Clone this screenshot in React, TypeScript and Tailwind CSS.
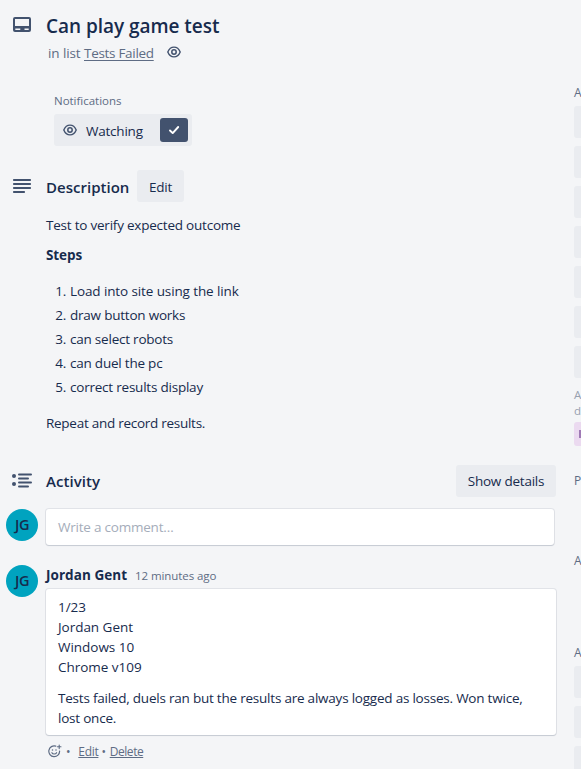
import type { ReactNode } from 'react';

function Eye() {
  return (
    <svg width="14" height="12" viewBox="0 0 14 12" fill="none" stroke="#42526e" className="block shrink-0">
      <path d="M.8 6C2.300 2.300 4.400 1.100 7 1.100S11.700 2.300 13.200 6C11.700 9.700 9.600 10.900 7 10.900S2.300 9.700.8 6Z" strokeWidth="1.400" />
      <circle cx="7" cy="6" r="2.200" strokeWidth="1.500" />
    </svg>
  );
}

function CardIcon() {
  return (
    <svg width="20" height="16" viewBox="0 0 20 16" className="block">
      <path fillRule="evenodd" fill="#42526e" d="M3 0h14a2 2 0 0 1 2 2v11a2 2 0 0 1-2 2H3a2 2 0 0 1-2-2V2A2 2 0 0 1 3 0ZM3 2v7h14V2ZM3.300 11.600v1.400h5v-1.400ZM12.500 11.600v1.400h4.200v-1.400Z" />
    </svg>
  );
}

function LinesIcon() {
  return (
    <svg width="20" height="16" viewBox="0 0 20 16" fill="#42526e" className="block">
      <rect x="1" y="1" width="18" height="2" rx="0.800" />
      <rect x="1" y="5" width="18" height="2" rx="0.800" />
      <rect x="1" y="9" width="18" height="2" rx="0.800" />
      <rect x="1" y="13" width="12" height="2" rx="0.800" />
    </svg>
  );
}

function ActivityIcon() {
  return (
    <svg width="22" height="16" viewBox="0 0 22 16" fill="#42526e" className="block">
      <circle cx="3" cy="3" r="2" />
      <circle cx="3" cy="11" r="2" />
      <rect x="7" y="0.500" width="14" height="2" rx="1" />
      <rect x="7" y="4.500" width="11" height="2" rx="1" />
      <rect x="7" y="8.500" width="14" height="2" rx="1" />
      <rect x="7" y="12.500" width="11" height="2" rx="1" />
    </svg>
  );
}

function Reaction() {
  return (
    <svg width="14" height="14" viewBox="0 0 14 14" fill="none" stroke="#5e6c84" strokeWidth="1.200" strokeLinecap="round" className="block shrink-0">
      <path d="M7.800 2.100A5.400 5.400 0 1 0 11.600 7" />
      <path d="M3.900 8.700c.9 1.700 3.800 1.700 4.700 0" />
      <path d="M4.500 5.900h.01M8 5.900h.01" strokeWidth="1.500" />
      <path d="M11.200 1v3.600M9.400 2.800H13" strokeWidth="1.100" />
    </svg>
  );
}

function Avatar() {
  return <div className="flex size-8 shrink-0 items-center justify-center rounded-full bg-[#00a3bf] text-[14.5px] font-semibold tracking-[-0.4px] text-[#172b4d]">JG</div>;
}

function SideButtons({ count }: { count: number }) {
  return (
    <div className="flex flex-col gap-2">
      {Array.from({ length: count }, (_, i) => (
        <div key={i} className="h-8 w-42 shrink-0 rounded-[3px] bg-[#eaecf0]" />
      ))}
    </div>
  );
}

function SideHeading({ children }: { children: ReactNode }) {
  return <h3 className="h-5 text-[12px] leading-5 font-medium text-[#5e6c84]">{children}</h3>;
}

const steps = ['Load into site using the link', 'draw button works', 'can select robots', 'can duel the pc', 'correct results display'];

export default function App() {
  return (
    <div className="flex h-[769px] w-full overflow-hidden bg-[#f4f5f7] font-['Open_Sans','Noto_Sans',sans-serif] text-[13.5px] leading-5 tracking-[-0.22px] text-[#172b4d]">
      <main className="w-[557px] shrink-0">
        <header className="flex pt-3.5">
          <div className="w-[46px] shrink-0 pt-[3px] pl-3"><CardIcon /></div>
          <div>
            <h1 className="text-[19px] leading-6 font-semibold tracking-[-0.04px] whitespace-nowrap">Can play game test</h1>
            <div className="mt-[5px] flex items-center pl-0.5 tracking-[-0.3px] text-[#5e6c84]">
              <span className="w-9 tracking-[-0.1px]">in list</span>
              <a className="underline underline-offset-2">Tests Failed</a>
              <span className="-mt-0.5 ml-[13px]"><Eye /></span>
            </div>
          </div>
        </header>

        <section className="mt-[27px] ml-[54px]">
          <h3 className="h-6 pt-px text-[11.5px] leading-5 font-medium tracking-[-0.02px] text-[#5e6c84]">Notifications</h3>
          <div className="flex h-8 w-[138px] items-center rounded-[3px] bg-[#eaecf0] pr-1 pl-[9px]">
            <span><Eye /></span>
            <span className="ml-[9px] pt-0.5">Watching</span>
            <span className="ml-auto flex h-6 w-7 items-center justify-center rounded-[3px] bg-[#42526e]">
              <svg width="12" height="10" viewBox="0 0 12 10" fill="none" stroke="white" strokeWidth="1.900" strokeLinecap="round" strokeLinejoin="round"><path d="m2 5.500 2.700 2.600L10.200 2" /></svg>
            </span>
          </div>
        </section>

        <section className="mt-6">
          <div className="flex h-8 items-center">
            <div className="w-[46px] pl-3"><LinesIcon /></div>
            <h2 className="w-[91px] pt-0.5 text-[15px] font-semibold tracking-[0.02px] whitespace-nowrap">Description</h2>
            <button className="h-8 w-[47px] rounded-[3px] bg-[#eaecf0] pt-0.5">Edit</button>
          </div>
          <div className="mt-[13px] ml-[46px]">
            <p>Test to verify expected outcome</p>
            <p className="mt-2.5 font-bold tracking-[-0.1px]">Steps</p>
            <ol className="mt-4 flex flex-col gap-1">
              {steps.map((s, i) => (
                <li key={s} className="flex"><span className="w-6 pr-1 text-right">{i + 1}.</span><span className={i === 0 ? 'tracking-[-0.11px]' : ''}>{s}</span></li>
              ))}
            </ol>
            <p className="mt-4 tracking-[-0.27px]">Repeat and record results.</p>
          </div>
        </section>

        <section className="mt-8">
          <div className="flex h-8 items-center">
            <div className="w-[46px] pl-[11px]"><ActivityIcon /></div>
            <h2 className="text-[15px] font-semibold tracking-[0.05px]">Activity</h2>
            <button className="mr-px ml-auto h-8 w-[100px] rounded-[3px] bg-[#eaecf0]">Show details</button>
          </div>
          <div className="mt-3 flex pl-1.5">
            <Avatar />
            <div className="ml-2 h-[36px] w-[508px] rounded-[3px] bg-white pt-2 pl-3 text-[#a5adba] shadow-[0_1px_1px_0_#091e4220,0_0_0_1px_#091e4214]">Write a comment…</div>
          </div>
          <div className="mt-5 flex pl-1.5">
            <Avatar />
            <div className="ml-2 w-[510px]">
              <div className="flex h-5">
                <span className="w-[89px] font-bold tracking-[0.05px]">Jordan Gent</span>
                <span className="pt-px text-[11.5px] tracking-[-0.07px] text-[#5e6c84]">12 minutes ago</span>
              </div>
              <div className="mt-1 h-[146px] rounded-[3px] bg-white px-3 pt-2 shadow-[0_1px_1px_0_#091e4220,0_0_0_1px_#091e4214]">
                <p className="tracking-[-0.03px]">1/23<br />Jordan Gent<br />Windows 10<br />Chrome v109</p>
                <p className="mt-[11px] whitespace-nowrap">Tests failed, duels ran but the results are always logged as losses. Won twice,<br />lost once.</p>
              </div>
              <div className="mt-[7px] flex items-center pl-0.5 text-[12px] text-[#5e6c84]">
                <span className="-mt-0.5"><Reaction /></span>
                <span className="ml-1">•</span>
                <a className="ml-2 tracking-[-0.3px] underline">Edit</a>
                <span className="mr-1 ml-[3px]">•</span>
                <a className="tracking-[-0.45px] underline">Delete</a>
              </div>
            </div>
          </div>
        </section>
      </main>

      <aside className="ml-[17px] w-42 shrink-0 pt-[83px]">
        <SideHeading>A</SideHeading>
        <div className="mt-[3px]"><SideButtons count={7} /></div>
        <p className="mt-[9px] text-[11.5px] leading-4 text-[#97a0af]">A<br />d</p>
        <div className="mt-[3px] flex h-6 items-center rounded-[3px] bg-[#ebdaf0] pl-[5px]">
          <span className="size-2 bg-[#9f7ab5]" />
        </div>
        <div className="mt-[25px]"><SideHeading>P</SideHeading></div>
        <div className="mt-[60px]"><SideHeading>A</SideHeading></div>
        <div className="mt-[72px]"><SideHeading>A</SideHeading></div>
        <div className="mt-[3px]"><SideButtons count={3} /></div>
      </aside>
    </div>
  );
}
